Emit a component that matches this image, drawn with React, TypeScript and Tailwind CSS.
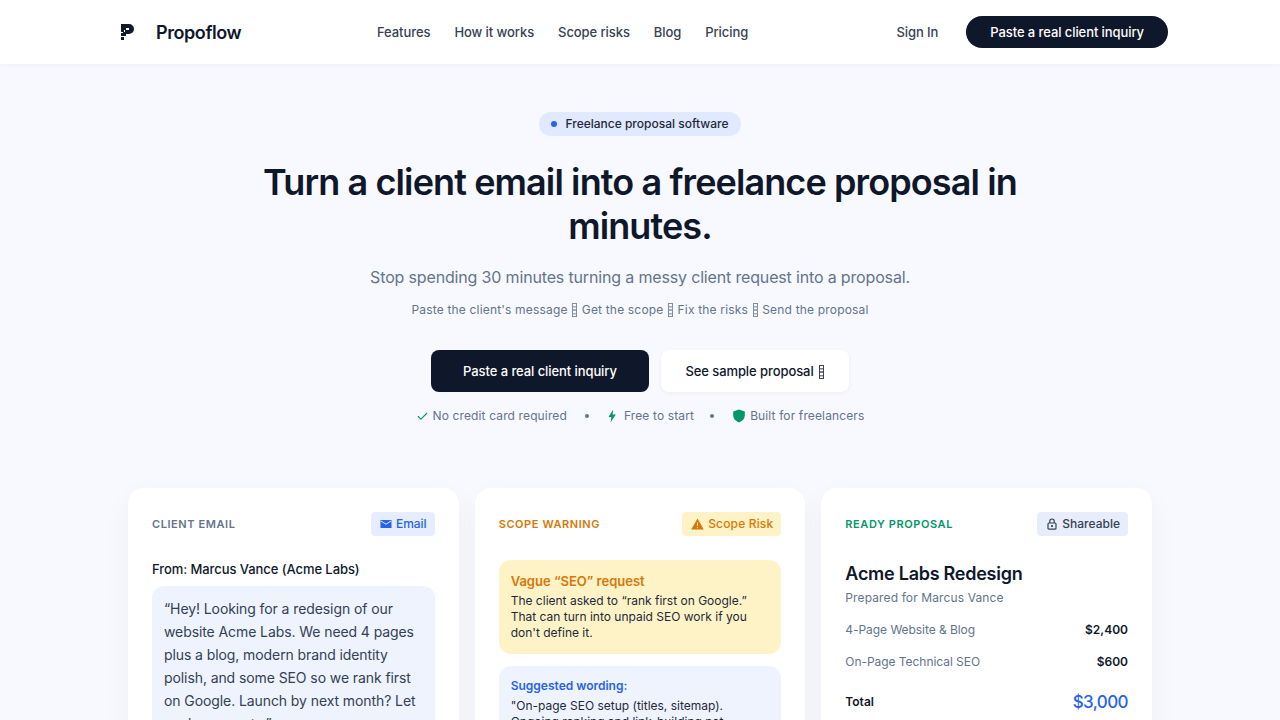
import { Check } from 'lucide-react';

const sans = { fontFamily: 'Inter, sans-serif' };

function Arrow() {
  return (
    <svg width="7" height="14" viewBox="0 0 7 14" className="inline align-[-3px] opacity-80" fill="currentColor">
      <path fillRule="evenodd" d="M1 0h5v14H1zM2 1v12h3V1z" />
      <rect x="2" y="3" width="3" height="1.5" opacity=".7" />
      <rect x="2" y="6" width="3" height="2" opacity=".7" />
      <rect x="2" y="10" width="3" height="1.5" opacity=".7" />
    </svg>
  );
}

function Card({ children }: { children: React.ReactNode }) {
  return (
    <div className="bg-white rounded-2xl shadow-[0_10px_30px_rgba(15,23,42,0.04)] px-6 pt-6 pb-6 h-[420px]">
      {children}
    </div>
  );
}

export default function App() {
  return (
    <div style={sans} className="min-h-screen bg-[#f8f9ff] text-[#0f172a] font-['Inter',sans-serif]">
      <nav className="h-16 bg-white shadow-[0_1px_4px_rgba(15,23,42,0.04)] flex items-center justify-between pl-[120px] pr-[112px]">
        <div className="flex items-center w-[257px]">
          <svg width="16" height="18" viewBox="1 0 16 18" className="text-[#111a2e] mr-5" fill="currentColor">
            <path d="M2 1h8a5 5 0 0 1 5 5 5 5 0 0 1-5 5H7v2H2v4h3v-3H2z" />
            <rect x="7" y="5" width="3" height="2" fill="#fff" />
            <rect x="2" y="9" width="2" height="1" fill="#fff" />
            <rect x="5" y="7" width="1" height="2" fill="#fff" />
          </svg>
          <span className="text-[18px] font-semibold tracking-[-0.42px]">Propoflow</span>
        </div>
        <div className="flex items-center gap-6 text-[13px] font-medium tracking-[-0.08px] text-[#374151] pt-px">
          <span>Features</span>
          <span>How it works</span>
          <span>Scope risks</span>
          <span>Blog</span>
          <span>Pricing</span>
        </div>
        <div className="flex items-center ml-auto gap-7">
          <span className="text-[13px] font-medium tracking-[-0.08px] text-[#374151] pt-px">Sign In</span>
          <span className="h-8 px-6 rounded-full bg-[#0f172a] text-white text-[13px] font-medium tracking-[-0.08px] flex items-center pt-px">Paste a real client inquiry</span>
        </div>
      </nav>

      <section className="flex flex-col items-center pt-12">
        <div className="h-6 px-3 rounded-full bg-[#e0e9ff] flex items-center gap-2 text-[12px] font-medium text-[#1f2937]">
          <span className="w-1.5 h-1.5 rounded-full bg-[#2563eb]" />
          Freelance proposal software
        </div>
        <h1 className="mt-6 w-[800px] text-center text-[36px] leading-[44px] font-semibold tracking-[-0.89px] text-[#0f172a]">
          Turn a client email into a freelance proposal in minutes.
        </h1>
        <p className="mt-[17px] text-[16px] leading-6 tracking-[-0.16px] text-[#64748b]">Stop spending 30 minutes turning a messy client request into a proposal.</p>
        <p className="mt-[11px] text-[12px] leading-5 text-[#64748b] tracking-[0.18px]">
          Paste the client's message <Arrow /> Get the scope <Arrow /> Fix the risks <Arrow /> Send the proposal
        </p>
        <div className="mt-[30px] flex gap-3">
          <span className="w-[218px] h-[42px] rounded-lg bg-[#0f172a] text-white text-[13px] font-medium tracking-[-0.08px] flex items-center justify-center pt-px">Paste a real client inquiry</span>
          <span className="w-[188px] h-[42px] rounded-lg bg-white shadow-[0_1px_4px_rgba(15,23,42,0.05)] text-[13px] font-medium tracking-[-0.08px] text-[#0f172a] flex items-center justify-center gap-1 pt-px">See sample proposal <Arrow /></span>
        </div>
        <div className="mt-[14px] flex items-center text-[12px] leading-5 tracking-[0.13px] text-[#64748b]">
          <Check className="w-[13px] h-[13px] text-[#059669] mr-[4px]" strokeWidth={2} />
          <span>No credit card required</span>
          <span className="w-1 h-1 rounded-full bg-[#64748b] mx-[18px]" />
          <svg width="10" height="14" viewBox="0 0 10 14" className="mr-[7px] text-[#059669]" fill="currentColor"><path d="M6.2 0.5 1.5 8H4.4L3.6 13.5 8.8 5.5H5.6z" /></svg>
          <span>Free to start</span>
          <span className="w-1 h-1 rounded-full bg-[#64748b] ml-4 mr-[18px]" />
          <svg width="14" height="14" viewBox="0 0 14 14" className="mr-[4px] text-[#059669]" fill="currentColor"><path d="M7 0.5 12.8 2.4v4.2c0 3.4-2.4 5.7-5.8 6.9C3.6 12.3 1.2 10 1.2 6.6V2.4z" /></svg>
          <span>Built for freelancers</span>
        </div>
      </section>

      <section className="mt-[62px] mx-[128px] grid grid-cols-3 gap-4 pb-16">
        <Card>
          <div className="flex items-center justify-between h-6">
            <span className="text-[11px] font-semibold tracking-[0.58px] text-[#64748b]">CLIENT EMAIL</span>
            <span className="h-6 pl-[9px] pr-2 rounded bg-[#e5edff] flex items-center gap-1 text-[12px] font-medium text-[#2563eb]">
              <svg width="12" height="10" viewBox="0 0 12 10" fill="currentColor"><path d="M0.5 1h11v8h-11z" /><path d="M1 2l5 3.2L11 2" fill="none" stroke="#e5edff" strokeWidth="1" /></svg>
              Email
            </span>
          </div>
          <p className="mt-[23px] text-[13px] leading-5 font-medium tracking-[-0.07px] text-[#0f172a]">From: Marcus Vance (Acme Labs)</p>
          <div className="mt-[7px] rounded-xl bg-[#eff3fe] px-3 py-[11px] text-[14px] leading-[23px] tracking-[-0.09px] text-[#334155]">
            “Hey! Looking for a redesign of our website Acme Labs. We need 4 pages plus a blog, modern brand identity polish, and some SEO so we rank first on Google. Launch by next month? Let me know costs.”
          </div>
        </Card>
        <Card>
          <div className="flex items-center justify-between h-6">
            <span className="text-[11px] font-semibold tracking-[0.58px] text-[#d97706]">SCOPE WARNING</span>
            <span className="h-6 pl-[9px] pr-2 rounded bg-[#fef3c7] flex items-center gap-1 text-[12px] font-medium tracking-[0.16px] text-[#d97706]">
              <svg width="13" height="12" viewBox="0 0 13 12" fill="currentColor"><path fillRule="evenodd" d="M6.5 0.5 12.8 11.5H0.2zM6 4.5v3.5h1V4.5zM6 9v1h1V9z" /></svg>
              Scope Risk
            </span>
          </div>
          <div className="mt-6 rounded-xl bg-[#fef3c7] px-3 pt-[13px] pb-[13px]">
            <p className="text-[13px] leading-4 font-semibold text-[#d97706]">Vague “SEO” request</p>
            <p className="mt-[4px] text-[12px] leading-4 text-[#1e293b]">The client asked to “rank first on Google.” That can turn into unpaid SEO work if you don't define it.</p>
          </div>
          <div className="mt-3 rounded-xl bg-[#eff3fe] px-3 pt-3 pb-3">
            <p className="text-[12px] leading-4 font-semibold text-[#2563eb]">Suggested wording:</p>
            <p className="mt-1 text-[12px] leading-4 text-[#1e293b]">"On-page SEO setup (titles, sitemap). Ongoing ranking and link-building not included."</p>
          </div>
        </Card>
        <Card>
          <div className="flex items-center justify-between h-6">
            <span className="text-[11px] font-semibold tracking-[0.58px] text-[#059669]">READY PROPOSAL</span>
            <span className="h-6 pl-[9px] pr-2 rounded bg-[#e8edfb] flex items-center gap-1 text-[12px] font-medium text-[#334155]">
              <svg width="12" height="12" viewBox="0 0 12 12" fill="none" stroke="currentColor" strokeWidth="1.2"><rect x="2" y="5" width="8" height="6.2" rx="1" /><path d="M3.8 5V3.2a2.2 2.2 0 0 1 4.4 0V5" /><circle cx="6" cy="8" r=".5" fill="currentColor" /></svg>
              Shareable
            </span>
          </div>
          <p className="mt-[26px] text-[18px] leading-6 font-semibold tracking-[-0.26px] text-[#0f172a]">Acme Labs Redesign</p>
          <p className="mt-[2px] text-[12px] leading-5 tracking-[0.12px] text-[#64748b]">Prepared for Marcus Vance</p>
          <div className="mt-[6px] flex items-center justify-between h-8 text-[12px]">
            <span className="text-[#64748b] tracking-[-0.05px]">4-Page Website &amp; Blog</span>
            <span className="font-semibold text-[#0f172a]">$2,400</span>
          </div>
          <div className="flex items-center justify-between h-8 text-[12px]">
            <span className="text-[#64748b] tracking-[-0.05px]">On-Page Technical SEO</span>
            <span className="font-semibold text-[#0f172a]">$600</span>
          </div>
          <div className="mt-2 flex items-center justify-between h-8">
            <span className="text-[12px] font-semibold text-[#0f172a]">Total</span>
            <span className="text-[17px] font-medium tracking-[-0.6px] text-[#2563eb] pt-px">$3,000</span>
          </div>
        </Card>
      </section>
    </div>
  );
}
